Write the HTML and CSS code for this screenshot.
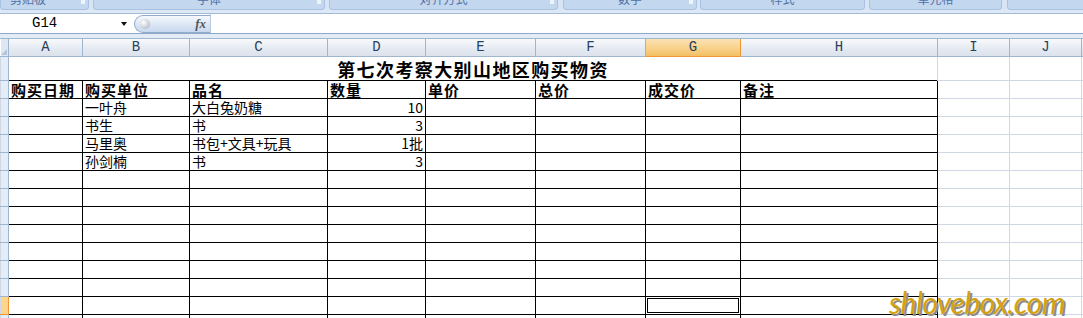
FILE: index.html
```html
<!doctype html>
<html>

<head>
    <title>购买物资</title>
    <link rel="stylesheet" href="styles.css">
</head>

<body>
    <!-- 功能区（只露出分组名称的下半部分） -->
    <div class="ribbon">
        <div class="group g1"><span>剪贴板</span><i class="launch"></i></div>
        <div class="group g2"><span>字体</span><i class="launch"></i></div>
        <div class="group g3"><span>对齐方式</span><i class="launch"></i></div>
        <div class="group g4"><span>数字</span><i class="launch"></i></div>
        <div class="group g5"><span>样式</span></div>
        <div class="group g6"><span>单元格</span></div>
        <div class="group g7"></div>
    </div>
    <div class="ribbonFoot"></div>

    <!-- 编辑栏 -->
    <div class="formulaBar">
        <div class="nameBox">G14<span class="drop"></span></div>
        <div class="fxPill"><span class="knob"></span><span class="fx">fx</span></div>
        <div class="formulaInput"></div>
    </div>
    <div class="sheetGap"></div>

    <!-- 工作表 -->
    <div class="sheet">
        <table class="grid">
            <colgroup>
                <col class="cHdr">
                <col class="cA"><col class="cB"><col class="cC"><col class="cD">
                <col class="cE"><col class="cF"><col class="cG"><col class="cH">
                <col class="cI"><col class="cJ"><col class="cK">
            </colgroup>
            <thead>
                <tr>
                    <th class="corner"><span class="tri"></span></th>
                    <th>A</th><th>B</th><th>C</th><th>D</th><th>E</th><th>F</th>
                    <th class="active">G</th><th>H</th><th>I</th><th>J</th><th>K</th>
                </tr>
            </thead>
            <tbody id="rows">
                <tr class="titleRow">
                    <td class="rh"></td>
                    <td class="title" colspan="8">第七次考察大别山地区购买物资</td>
                    <td></td><td></td><td></td>
                </tr>
            </tbody>
        </table>
    </div>

    <div class="watermark">shlovebox.com</div>

    <script>
        // 表格数据：表头 + 4 条记录，其余为空行
        const head = ['购买日期', '购买单位', '品名', '数量', '单价', '总价', '成交价', '备注'];
        const data = [
            ['', '一叶舟', '大白兔奶糖', '10'],
            ['', '书生', '书', '3'],
            ['', '马里奥', '书包+文具+玩具', '1批'],
            ['', '孙剑楠', '书', '3']
        ];
        const tbody = document.getElementById('rows');

        function addRow(cells, isHead, rowNo) {
            const tr = document.createElement('tr');
            const rh = document.createElement('td');
            rh.className = rowNo === 14 ? 'rh active' : 'rh';
            tr.appendChild(rh);
            for (let i = 0; i < 8; i++) {
                const td = document.createElement('td');
                td.className = isHead ? 'box headCell' : 'box';
                if (i === 3 && !isHead) td.className += ' num';
                if (rowNo === 14 && i === 6) td.className += ' selected';
                td.textContent = cells[i] || '';
                tr.appendChild(td);
            }
            for (let i = 0; i < 3; i++) {
                tr.appendChild(document.createElement('td'));
            }
            tbody.appendChild(tr);
        }

        addRow(head, true, 2);
        for (let r = 3; r <= 15; r++) {
            addRow(data[r - 3] || [], false, r);
        }
    </script>
</body>

</html>
```

FILE: styles.css
```css
html, body {
    margin: 0;
    height: 318px;
    overflow: hidden;
    background-color: #fff;
}

body {
    position: relative;
    font-family: "Noto Sans CJK SC", sans-serif;
}

/* 功能区 */
.ribbon {
    height: 10px;
    display: flex;
    gap: 4px;
    overflow: hidden;
    background-color: #d7e4f4;
}

.group {
    position: relative;
    flex-shrink: 0;
    box-sizing: border-box;
    height: 10px;
    display: flex;
    justify-content: center;
    background-color: #c3d7ef;
    border: 1px solid #a9c1e0;
    border-top: none;
    border-radius: 0 0 4px 4px;
}

.group span {
    margin-top: -9px;
    font-size: 12px;
    line-height: 16px;
    color: #4f73a6;
}

.launch {
    position: absolute;
    right: 3px;
    top: 0;
    width: 4px;
    height: 4px;
    background-color: #eef4fb;
}

.g1 { width: 89px; justify-content: flex-start; padding-left: 9px; }
.g2 { width: 232px; }
.g3 { width: 229px; margin-left: 0; }
.g4 { width: 134px; margin-left: 1px; }
.g5 { width: 165px; margin-left: -1px; }
.g6 { width: 133px; }
.g7 { width: 100px; margin-left: 1px; }

.ribbonFoot {
    height: 3px;
    background-color: #dde8f6;
    border-bottom: 1px solid #a6bad6;
}

/* 编辑栏 */
.formulaBar {
    height: 19px;
    display: flex;
    border-bottom: 1px solid #8fa8c9;
    background-color: #fff;
}

.nameBox {
    position: relative;
    width: 134px;
    font-family: "Liberation Mono", monospace;
    font-size: 14px;
    line-height: 19px;
    padding-left: 32px;
    box-sizing: border-box;
    color: #000;
}

.drop {
    position: absolute;
    left: 121px;
    top: 8px;
    border-left: 3px solid transparent;
    border-right: 3px solid transparent;
    border-top: 4px solid #111;
}

.fxPill {
    position: relative;
    width: 76px;
    box-sizing: border-box;
    margin-top: 1px;
    height: 18px;
    border: 1px solid #93abcc;
    border-right: none;
    border-radius: 10px 0 0 10px;
    background: linear-gradient(#f6f9fd, #dbe6f4 55%, #c9d8ee);
}

.knob {
    position: absolute;
    left: 5px;
    top: 3px;
    width: 10px;
    height: 10px;
    border-radius: 50%;
    background: radial-gradient(circle at 35% 35%, #ffffff, #c8ced6 60%, #9aa5b4);
}

.fx {
    position: absolute;
    right: 4px;
    top: 0;
    font-family: "Liberation Serif", serif;
    font-style: italic;
    font-weight: bold;
    font-size: 13px;
    line-height: 16px;
    color: #555;
}

.formulaInput {
    flex: 1;
    border-left: 1px solid #b8c8dd;
}

.sheetGap {
    height: 4px;
    background-color: #e3ebf6;
    border-bottom: 1px solid #9eb6ce;
}

/* 工作表 */
.sheet {
    width: 1083px;
    overflow: hidden;
}

.grid {
    table-layout: fixed;
    border-collapse: collapse;
    width: 1101px;
}

.cHdr { width: 8px; }
.cA { width: 74px; }
.cB { width: 107px; }
.cC { width: 138px; }
.cD { width: 98px; }
.cE { width: 110px; }
.cF { width: 110px; }
.cG { width: 95px; }
.cH { width: 197px; }
.cI { width: 72px; }
.cJ { width: 72px; }
.cK { width: 20px; }

.grid th {
    height: 17px;
    padding: 0;
    font-family: "Liberation Mono", monospace;
    font-weight: normal;
    font-size: 14px;
    line-height: 17px;
    color: #27415f;
    background: linear-gradient(#f8f9fb, #e4e9f1 60%, #dbe2ec);
    border-right: 1px solid #9eb6ce;
    border-bottom: 1px solid #9eb6ce;
}

.grid th.active {
    background: linear-gradient(#fbe3b5, #f8cf86 60%, #f2c063);
    border-right: 1px solid #f29536;
    border-bottom: 1px solid #f29536;
}

.grid th.corner {
    position: relative;
    background: #dfe7f2;
}

.tri {
    position: absolute;
    right: 1px;
    bottom: 1px;
    border-left: 6px solid transparent;
    border-bottom: 6px solid #b6c6da;
}

.grid td {
    height: 17px;
    padding: 0 2px;
    overflow: hidden;
    white-space: nowrap;
    font-size: 14px;
    line-height: 17px;
    vertical-align: bottom;
    color: #000;
    border: 1px solid #d0d7e5;
}

.grid td.rh {
    padding: 0;
    background-color: #e4ecf7;
    border-right: 1px solid #9eb6ce;
    border-bottom: 1px solid #9eb6ce;
}

.grid td.rh.active {
    background-color: #ffd58d;
    border-right: 1px solid #f29536;
    border-bottom: 1px solid #f29536;
}

.titleRow td {
    height: 23px;
}

.grid td.title {
    border: none;
    text-align: center;
    font-weight: bold;
    font-size: 18px;
    letter-spacing: 1.4px;
    line-height: 22px;
}

.grid td.box {
    border: 1px solid #000;
}

.grid td.headCell {
    font-weight: bold;
    font-size: 15px;
    letter-spacing: 1px;
}

.grid td.num {
    text-align: right;
}

.grid td.selected {
    box-shadow: inset 0 0 0 1px #fff, inset 0 0 0 2px #000;
}

/* 水印 */
.watermark {
    position: absolute;
    left: 889px;
    top: 284px;
    font-family: Lato, sans-serif;
    font-style: italic;
    font-size: 30px;
    letter-spacing: -0.5px;
    color: #d4a20f;
    text-shadow: 2px 2px 0 #8c8c8c;
}
```
